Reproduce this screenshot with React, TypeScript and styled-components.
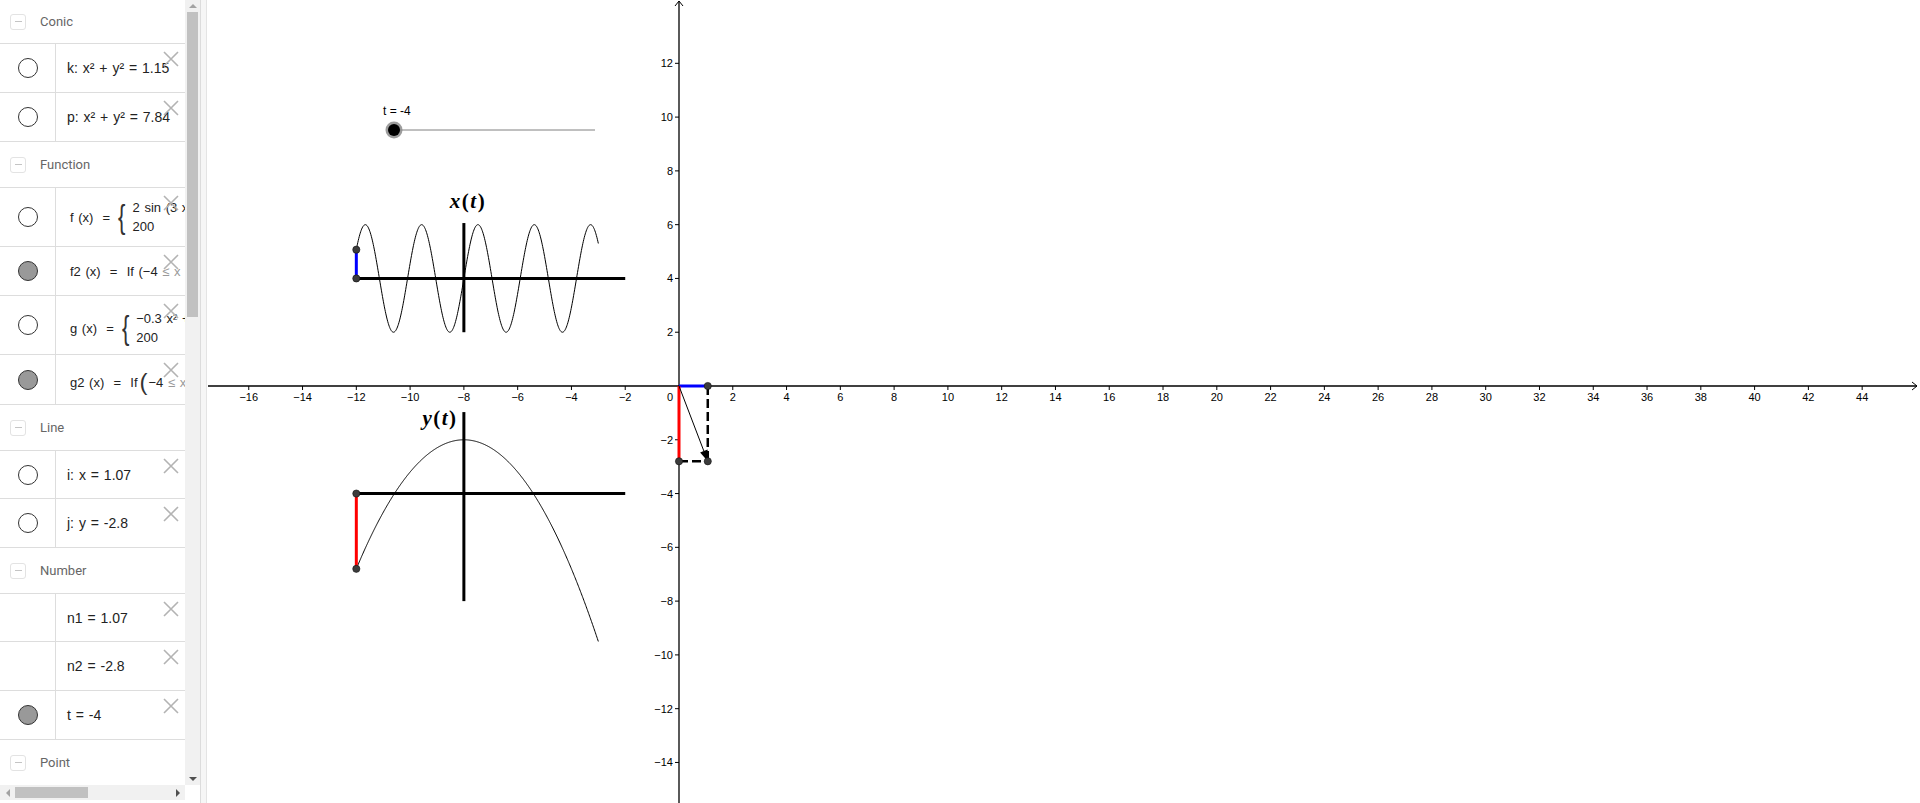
import React from 'react'
import styled, { createGlobalStyle } from 'styled-components'

const GlobalStyle = createGlobalStyle`
  html, body { margin: 0; padding: 0; height: 100%; overflow: hidden; background: #fff; }
  #root { height: 100%; }
`

const Page = styled.div`
  display: flex;
  width: 1920px;
  height: 803px;
  font-family: "Liberation Sans", Arial, sans-serif;
  background: #fff;
`

const Sidebar = styled.aside`
  width: 200px;
  flex: none;
  display: grid;
  grid-template-columns: 185px 15px;
  grid-template-rows: 785px 15px;
`

const List = styled.div`
  overflow: hidden;
`

const VScroll = styled.div`
  background: #f1f1f1;
  display: flex;
  flex-direction: column;
  align-items: center;
`

const HScroll = styled.div`
  background: #f1f1f1;
  display: flex;
  align-items: center;
`

const Thumb = styled.div<{ $w: number; $h: number }>`
  width: ${p => p.$w}px;
  height: ${p => p.$h}px;
  background: #c1c1c1;
  flex: none;
`

const Spacer = styled.div`
  flex: 1;
`

const ArrowBox = styled.div<{ $dir: 'up' | 'down' | 'left' | 'right'; $dark?: boolean }>`
  flex: none;
  width: 15px;
  height: ${p => (p.$dir === 'up' || p.$dir === 'down' ? 12 : 15)}px;
  display: flex;
  align-items: center;
  justify-content: center;
  &::after {
    content: '';
    width: 0;
    height: 0;
    ${p => {
      const c = p.$dark ? '#505050' : '#a3a3a3'
      switch (p.$dir) {
        case 'up': return `border-left: 4px solid transparent; border-right: 4px solid transparent; border-bottom: 4px solid ${c};`
        case 'down': return `border-left: 4px solid transparent; border-right: 4px solid transparent; border-top: 4px solid ${c};`
        case 'left': return `border-top: 4px solid transparent; border-bottom: 4px solid transparent; border-right: 4px solid ${c};`
        default: return `border-top: 4px solid transparent; border-bottom: 4px solid transparent; border-left: 4px solid ${c};`
      }
    }}
  }
`

const Corner = styled.div`
  background: #fff;
`

const Splitter = styled.div`
  width: 5px;
  flex: none;
  background: #f6f6f6;
  border-left: 1px solid #dcdcdc;
  border-right: 1px solid #e4e4e4;
`

const Graphics = styled.main`
  flex: 1;
  overflow: hidden;
  position: relative;
`

const GroupHeader = styled.div<{ $first?: boolean }>`
  height: ${p => (p.$first ? 44 : 46)}px;
  box-sizing: border-box;
  border-bottom: 1px solid #ddd;
  display: flex;
  align-items: center;
  padding-left: 10px;
  gap: 14px;
  font-family: Roboto, "Liberation Sans", sans-serif;
  font-size: 13px;
  color: #666;
`

const Collapse = styled.span`
  width: 14px;
  height: 14px;
  border: 1px solid #e3e3e3;
  border-radius: 3px;
  display: flex;
  align-items: center;
  justify-content: center;
  &::after {
    content: '';
    width: 7px;
    height: 1px;
    background: #c4c4c4;
  }
`

const Item = styled.div<{ $h: number }>`
  position: relative;
  height: ${p => p.$h}px;
  box-sizing: border-box;
  border-bottom: 1px solid #ddd;
  display: grid;
  grid-template-columns: 56px 1fr;
`

const Marble = styled.div`
  border-right: 1px solid #ddd;
  display: flex;
  align-items: center;
  justify-content: center;
`

const Toggle = styled.span<{ $on?: boolean }>`
  width: 18px;
  height: 18px;
  border-radius: 50%;
  border: 1px solid #333;
  background: ${p => (p.$on ? '#999' : '#fff')};
`

const Content = styled.div<{ $small?: boolean }>`
  overflow: hidden;
  white-space: nowrap;
  display: flex;
  align-items: center;
  padding-left: ${p => (p.$small ? 14 : 11)}px;
  font-size: ${p => (p.$small ? 13 : 14)}px;
  word-spacing: 1px;
  color: #222;
`

const Formula = styled.span<{ $drop?: number }>`
  display: inline-flex;
  align-items: center;
  margin-top: ${p => p.$drop ?? 0}px;
`

const Brace = styled.span`
  font-size: 34px;
  line-height: 1;
  font-weight: 300;
  margin: 0 5px 2px 6px;
  transform: scaleX(0.65);
  color: #333;
`

const Paren = styled.span`
  font-size: 24px;
  line-height: 1;
  margin: 0 1px 2px 2px;
  color: #333;
`

const Cases = styled.span`
  display: inline-flex;
  flex-direction: column;
  line-height: 19px;
`

const Muted = styled.span`
  color: #999;
`

const Delete = styled.button`
  position: absolute;
  top: 7px;
  right: 6px;
  width: 16px;
  height: 16px;
  padding: 0;
  border: 0;
  background: transparent;
  display: block;
`

const Plot = styled.svg`
  display: block;
`

const XIcon = () => (
  <Delete aria-label="delete">
    <svg width="16" height="16" viewBox="0 0 16 16">
      <path d="M1 1 L15 15 M15 1 L1 15" stroke="#b3b3b3" strokeWidth="1.6" />
    </svg>
  </Delete>
)

type Row = { marble?: 'off' | 'on' | 'none'; h?: number; small?: boolean; body: React.ReactNode }

const groups: { title: string; rows: Row[] }[] = [
  {
    title: 'Conic',
    rows: [
      { marble: 'off', body: 'k: x² + y² = 1.15' },
      { marble: 'off', body: 'p: x² + y² = 7.84' },
    ],
  },
  {
    title: 'Function',
    rows: [
      {
        marble: 'off', h: 59, small: true,
        body: (
          <Formula>
            f (x) &nbsp;=<Brace>{'{'}</Brace>
            <Cases><span>2 sin (3 x)</span><span>200</span></Cases>
          </Formula>
        ),
      },
      {
        marble: 'on', small: true,
        body: <Formula>f2 (x) &nbsp;= &nbsp;If (−4 <Muted>&nbsp;≤ x +</Muted></Formula>,
      },
      {
        marble: 'off', h: 59, small: true,
        body: (
          <Formula $drop={6}>
            g (x) &nbsp;=<Brace>{'{'}</Brace>
            <Cases><span>−0.3 x² +</span><span>200</span></Cases>
          </Formula>
        ),
      },
      {
        marble: 'on', h: 50, small: true,
        body: <Formula $drop={6}>g2 (x) &nbsp;= &nbsp;If<Paren>(</Paren>−4 <Muted>&nbsp;≤ x</Muted></Formula>,
      },
    ],
  },
  {
    title: 'Line',
    rows: [
      { marble: 'off', h: 48, body: 'i: x = 1.07' },
      { marble: 'off', body: 'j: y = -2.8' },
    ],
  },
  {
    title: 'Number',
    rows: [
      { marble: 'none', h: 48, body: 'n1 = 1.07' },
      { marble: 'none', body: 'n2 = -2.8' },
      { marble: 'on', body: 't = -4' },
    ],
  },
  { title: 'Point', rows: [] },
]

// world -> screen (page coordinates)
const U = 26.89
const OX = 679
const OY = 386
const px = (x: number) => OX + x * U
const py = (y: number) => OY - y * U

const curve = (f: (x: number) => number, a: number, b: number, n = 500) => {
  let d = ''
  for (let i = 0; i <= n; i++) {
    const x = a + ((b - a) * i) / n
    d += (i ? 'L' : 'M') + px(x).toFixed(2) + ' ' + py(f(x)).toFixed(2)
  }
  return d
}

const minus = (v: number) => (v < 0 ? '−' + Math.abs(v) : String(v))

const xTicks: number[] = []
for (let k = -16; k <= 44; k += 2) if (k !== 0) xTicks.push(k)
const yTicks: number[] = []
for (let k = 12; k >= -14; k -= 2) if (k !== 0) yTicks.push(k)

const n1 = 1.07
const n2 = -2.8

const Point = ({ x, y }: { x: number; y: number }) => (
  <circle cx={x} cy={y} r={3.6} fill="#3c3c3c" stroke="#111" strokeWidth={0.6} />
)

const Canvas = () => {
  const tickFont = { fontFamily: '"Liberation Sans", Arial, sans-serif', fontSize: 11 }
  const mathFont = { fontFamily: '"Liberation Serif", "Times New Roman", serif', fontSize: 21, fontWeight: 700 }
  const ax = px(-12)
  return (
    <Plot width={1713} height={803} viewBox="207 0 1713 803">
      {/* main axes */}
      <line x1={208} y1={OY} x2={1917} y2={OY} stroke="#000" strokeWidth={1.3} />
      <path d="M1912 382 L1917 386 L1912 390" fill="none" stroke="#000" strokeWidth={1} />
      <line x1={OX} y1={1} x2={OX} y2={803} stroke="#000" strokeWidth={1.3} />
      <path d="M675 6 L679 1 L683 6" fill="none" stroke="#000" strokeWidth={1} />
      {xTicks.map(k => (
        <g key={'x' + k}>
          <line x1={px(k)} y1={OY} x2={px(k)} y2={OY + 4} stroke="#000" strokeWidth={1} />
          <text x={px(k)} y={OY + 15} textAnchor="middle" style={tickFont}>{minus(k)}</text>
        </g>
      ))}
      <text x={673} y={OY + 15} textAnchor="end" style={tickFont}>0</text>
      {yTicks.map(k => (
        <g key={'y' + k}>
          <line x1={OX - 4} y1={py(k)} x2={OX} y2={py(k)} stroke="#000" strokeWidth={1} />
          <text x={673} y={py(k) + 4} textAnchor="end" style={tickFont}>{minus(k)}</text>
        </g>
      ))}

      {/* slider t */}
      <text x={383} y={115} style={{ ...tickFont, fontSize: 12 }}>t = -4</text>
      <line x1={394} y1={130} x2={595} y2={130} stroke="#808080" strokeWidth={1} />
      <circle cx={394} cy={130} r={8.5} fill="#8c8c8c" opacity={0.85} />
      <circle cx={394} cy={130} r={6} fill="#000" />

      {/* x(t) plot */}
      <text x={468} y={208} textAnchor="middle" style={mathFont} letterSpacing={1.5}>
        <tspan fontStyle="italic">x</tspan>(<tspan fontStyle="italic">t</tspan>)
      </text>
      <line x1={ax} y1={py(4)} x2={px(-2)} y2={py(4)} stroke="#000" strokeWidth={3} />
      <line x1={px(-8)} y1={py(6.06)} x2={px(-8)} y2={py(2)} stroke="#000" strokeWidth={3} />
      <path d={curve(x => 4 + 2 * Math.sin(3 * (x + 8)), -12, -3)} fill="none" stroke="#000" strokeWidth={1} />
      <line x1={ax} y1={py(4)} x2={ax} y2={py(4 + n1)} stroke="#0000ff" strokeWidth={3} />
      <Point x={ax} y={py(4)} />
      <Point x={ax} y={py(4 + n1)} />

      {/* y(t) plot */}
      <text x={440} y={425} textAnchor="middle" style={mathFont} letterSpacing={1.5}>
        <tspan fontStyle="italic">y</tspan>(<tspan fontStyle="italic">t</tspan>)
      </text>
      <line x1={ax} y1={py(-4)} x2={px(-2)} y2={py(-4)} stroke="#000" strokeWidth={3} />
      <line x1={px(-8)} y1={py(-0.97)} x2={px(-8)} y2={py(-8)} stroke="#000" strokeWidth={3} />
      <path d={curve(x => -2 - 0.3 * (x + 8) * (x + 8), -12, -3)} fill="none" stroke="#000" strokeWidth={1} />
      <line x1={ax} y1={py(-4)} x2={ax} y2={py(-4 + n2)} stroke="#ff0000" strokeWidth={3} />
      <Point x={ax} y={py(-4)} />
      <Point x={ax} y={py(-4 + n2)} />

      {/* vector at origin */}
      <line x1={OX} y1={OY} x2={px(n1)} y2={OY} stroke="#0000ff" strokeWidth={3} />
      <line x1={OX} y1={OY} x2={OX} y2={py(n2)} stroke="#ff0000" strokeWidth={3} />
      <line x1={px(n1)} y1={OY} x2={px(n1)} y2={py(n2)} stroke="#000" strokeWidth={2.5} strokeDasharray="9 4" />
      <line x1={OX} y1={py(n2)} x2={px(n1)} y2={py(n2)} stroke="#000" strokeWidth={2.5} strokeDasharray="9 4" />
      {(() => {
        const x2 = px(n1)
        const y2 = py(n2)
        const dx = x2 - OX
        const dy = y2 - OY
        const len = Math.hypot(dx, dy)
        const ux = dx / len
        const uy = dy / len
        const bx = x2 - ux * 11
        const by = y2 - uy * 11
        const nx = -uy * 4
        const ny = ux * 4
        return (
          <g>
            <line x1={OX} y1={OY} x2={bx} y2={by} stroke="#000" strokeWidth={1} />
            <path d={`M${x2} ${y2} L${bx + nx} ${by + ny} L${bx - nx} ${by - ny} Z`} fill="#000" />
          </g>
        )
      })()}
      <Point x={px(n1)} y={OY} />
      <Point x={OX} y={py(n2)} />
      <Point x={px(n1)} y={py(n2)} />
    </Plot>
  )
}

export default function App() {
  return (
    <>
      <GlobalStyle />
      <Page>
        <Sidebar>
          <List>
            {groups.map((g, gi) => (
              <React.Fragment key={g.title}>
                <GroupHeader $first={gi === 0}>
                  <Collapse />
                  {g.title}
                </GroupHeader>
                {g.rows.map((r, i) => (
                  <Item key={i} $h={r.h ?? 49}>
                    <Marble>{r.marble !== 'none' && <Toggle $on={r.marble === 'on'} />}</Marble>
                    <Content $small={r.small}>{r.body}</Content>
                    <XIcon />
                  </Item>
                ))}
              </React.Fragment>
            ))}
          </List>
          <VScroll>
            <ArrowBox $dir="up" />
            <Thumb $w={11} $h={305} />
            <Spacer />
            <ArrowBox $dir="down" $dark />
          </VScroll>
          <HScroll>
            <ArrowBox $dir="left" />
            <Thumb $w={73} $h={11} />
            <Spacer />
            <ArrowBox $dir="right" $dark />
          </HScroll>
          <Corner />
        </Sidebar>
        <Splitter />
        <Graphics>
          <Canvas />
        </Graphics>
      </Page>
    </>
  )
}
